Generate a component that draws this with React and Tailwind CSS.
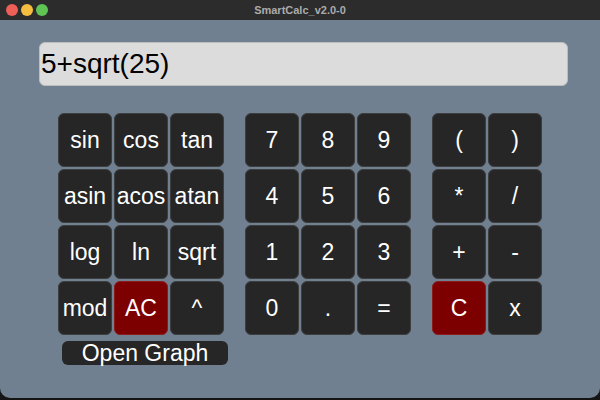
import React from 'react';

const font = { fontFamily: '"Liberation Sans", Arial, sans-serif' };

const funcKeys = ['sin', 'cos', 'tan', 'asin', 'acos', 'atan', 'log', 'ln', 'sqrt', 'mod', 'AC', '^'];
const numKeys = ['7', '8', '9', '4', '5', '6', '1', '2', '3', '0', '.', '='];
const opKeys = ['(', ')', '*', '/', '+', '-', 'C', 'x'];

function Key({ label }) {
  const danger = label === 'AC' || label === 'C';
  return (
    <button
      type="button"
      className={`w-[54px] h-[54px] rounded-[6px] border flex items-center justify-center text-white text-[23px] leading-none ${
        danger ? 'bg-[#7d0000] border-[#8c1c1c]' : 'bg-[#262626] border-[#3e3e3e]'
      }`}
    >
      {label}
    </button>
  );
}

function KeyGroup({ keys, cols }) {
  return (
    <div
      className={`grid gap-[2px] w-max ${
        cols === 2 ? 'grid-cols-[54px_54px]' : 'grid-cols-[54px_54px_54px]'
      }`}
    >
      {keys.map((k) => (
        <Key key={k} label={k} />
      ))}
    </div>
  );
}

export default function App() {
  return (
    <div className="w-[600px] h-[400px] bg-[#151515]" style={font}>
      <div className="h-[398px] rounded-b-[10px] overflow-hidden bg-[#708090] flex flex-col">
        {/* title bar */}
        <div className="relative h-[20px] bg-[#2c2c2c] flex items-center justify-center">
          <div className="absolute left-[6px] top-[4px] flex gap-[3px]">
            <span className="w-[12px] h-[12px] rounded-full bg-[#ee5f57]" />
            <span className="w-[12px] h-[12px] rounded-full bg-[#f6be41]" />
            <span className="w-[12px] h-[12px] rounded-full bg-[#5fc454]" />
          </div>
          <span className="text-[11px] font-bold text-[#ababab]">SmartCalc_v2.0-0</span>
        </div>

        <div className="pl-[39px] pt-[22px]">
          <div className="w-[529px] h-[44px] rounded-[6px] bg-[#dcdcdc] border border-[#bdbdbd] flex items-center pl-[1px] text-[28px] text-black">
            5+sqrt(25)
          </div>

          <div className="mt-[27px] ml-[19px] flex items-start">
            <div className="flex flex-col w-[166px]">
              <KeyGroup keys={funcKeys} cols={3} />
              <button
                type="button"
                className="mt-[6px] ml-[4px] w-[166px] h-[24px] rounded-[6px] bg-[#262626] text-white text-[23px] leading-none flex items-center justify-center whitespace-nowrap"
              >
                Open Graph
              </button>
            </div>
            <div className="ml-[21px]">
              <KeyGroup keys={numKeys} cols={3} />
            </div>
            <div className="ml-[21px]">
              <KeyGroup keys={opKeys} cols={2} />
            </div>
          </div>
        </div>
      </div>
    </div>
  );
}
